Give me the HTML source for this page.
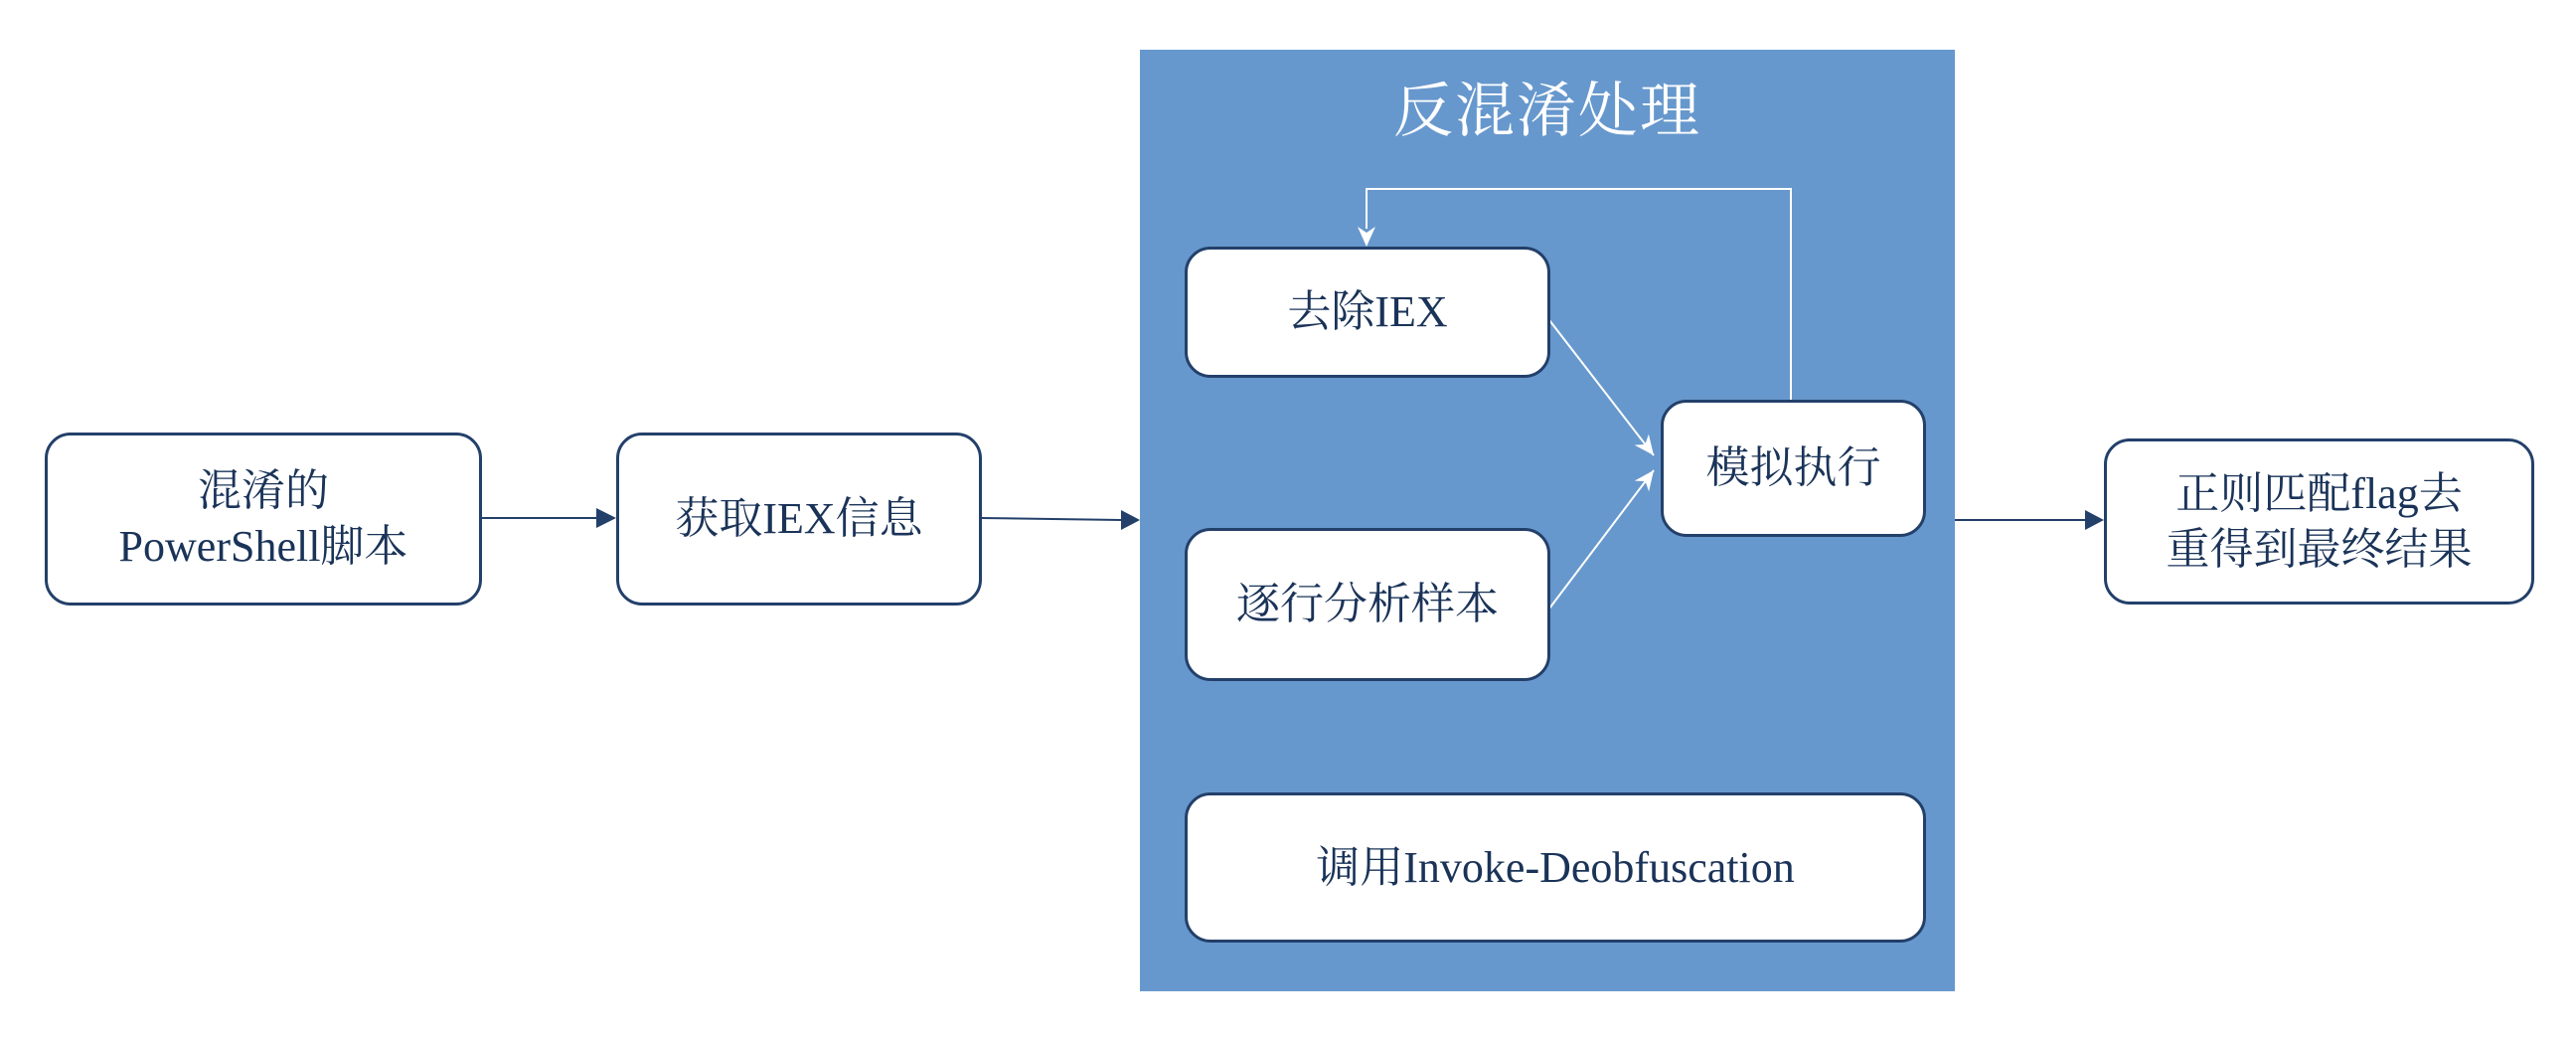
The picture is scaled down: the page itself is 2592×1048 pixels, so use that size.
<!DOCTYPE html>
<html><head><meta charset="utf-8"><style>
html,body{margin:0;padding:0;background:#fff;}
body{width:2592px;height:1048px;position:relative;overflow:hidden;font-family:"Liberation Serif","Noto Serif CJK SC",serif;color:#1a3358;}
.panel{position:absolute;left:1147px;top:50px;width:820px;height:947px;background:#6798cd;}
.box{position:absolute;box-sizing:border-box;border:3px solid #23406a;border-radius:26px;background:#fff;display:flex;align-items:center;justify-content:center;text-align:center;font-size:44px;line-height:56px;}
.title{position:absolute;left:1147px;width:820px;top:76px;text-align:center;color:#fff;font-size:60px;line-height:72px;letter-spacing:2px;}
svg{position:absolute;left:0;top:0;}
</style></head><body>
<div class="panel"></div>
<div class="title">反混淆处理</div>
<svg width="2592" height="1048">
<defs>
<marker id="aw" markerWidth="22" markerHeight="22" refX="20" refY="11" orient="auto" markerUnits="userSpaceOnUse"><path d="M0,2 L20,11 L0,20 L6,11 z" fill="#fff"/></marker>
</defs>
<g stroke="#23406a" stroke-width="2" fill="none">
<line x1="484" y1="521" x2="600" y2="521"/>
<line x1="987" y1="521" x2="1128" y2="523"/>
<line x1="1967" y1="523" x2="2098" y2="523"/>
</g>
<g fill="#23406a">
<path d="M600,511 L620,521 L600,531 z"/>
<path d="M1128,513 L1147,523 L1128,533 z"/>
<path d="M2098,513 L2117,523 L2098,533 z"/>
</g>
<g stroke="#fff" stroke-width="2" fill="none">
<polyline points="1802,402 1802,190 1375,190 1375,230"/>
<line x1="1559" y1="322" x2="1664" y2="458" marker-end="url(#aw)"/>
<line x1="1559" y1="612" x2="1664" y2="473" marker-end="url(#aw)"/>
</g>
<path d="M1366,228 L1375,248 L1384,228 L1375,234 z" fill="#fff"/>
</svg>
<div class="box" style="left:45px;top:435px;width:440px;height:174px;">混淆的<br>PowerShell脚本</div>
<div class="box" style="left:620px;top:435px;width:368px;height:174px;">获取IEX信息</div>
<div class="box" style="left:1192px;top:248px;width:368px;height:132px;">去除IEX</div>
<div class="box" style="left:1192px;top:531px;width:368px;height:154px;">逐行分析样本</div>
<div class="box" style="left:1671px;top:402px;width:267px;height:138px;">模拟执行</div>
<div class="box" style="left:1192px;top:797px;width:746px;height:151px;">调用Invoke-Deobfuscation</div>
<div class="box" style="left:2117px;top:441px;width:433px;height:167px;">正则匹配flag去<br>重得到最终结果</div>
</body></html>
